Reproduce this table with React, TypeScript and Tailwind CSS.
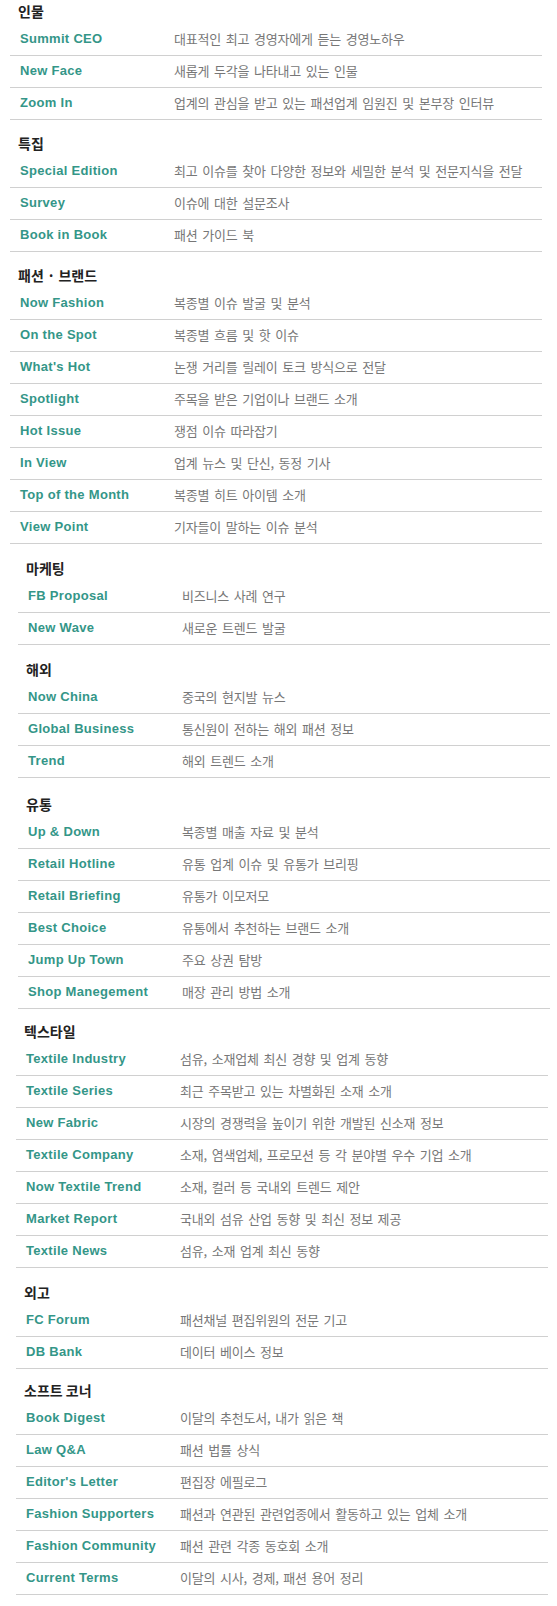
import React from 'react';

type Item = { title: string; desc: string };
type Section = { name: string; box: string; items: Item[] };

const sections: Section[] = [
  {
    name: '인물',
    box: 'ml-[10px]',
    items: [
      { title: 'Summit CEO', desc: '대표적인 최고 경영자에게 듣는 경영노하우' },
      { title: 'New Face', desc: '새롭게 두각을 나타내고 있는 인물' },
      { title: 'Zoom In', desc: '업계의 관심을 받고 있는 패션업계 임원진 및 본부장 인터뷰' },
    ],
  },
  {
    name: '특집',
    box: 'ml-[10px] mt-[12px]',
    items: [
      { title: 'Special Edition', desc: '최고 이슈를 찾아 다양한 정보와 세밀한 분석 및 전문지식을 전달' },
      { title: 'Survey', desc: '이슈에 대한 설문조사' },
      { title: 'Book in Book', desc: '패션 가이드 북' },
    ],
  },
  {
    name: '패션 · 브랜드',
    box: 'ml-[10px] mt-[12px]',
    items: [
      { title: 'Now Fashion', desc: '복종별 이슈 발굴 및 분석' },
      { title: 'On the Spot', desc: '복종별 흐름 및 핫 이슈' },
      { title: "What's Hot", desc: '논쟁 거리를 릴레이 토크 방식으로 전달' },
      { title: 'Spotlight', desc: '주목을 받은 기업이나 브랜드 소개' },
      { title: 'Hot Issue', desc: '쟁점 이슈 따라잡기' },
      { title: 'In View', desc: '업계 뉴스 및 단신, 동정 기사' },
      { title: 'Top of the Month', desc: '복종별 히트 아이템 소개' },
      { title: 'View Point', desc: '기자들이 말하는 이슈 분석' },
    ],
  },
  {
    name: '마케팅',
    box: 'ml-[18px] mt-[13px]',
    items: [
      { title: 'FB Proposal', desc: '비즈니스 사례 연구' },
      { title: 'New Wave', desc: '새로운 트렌드 발굴' },
    ],
  },
  {
    name: '해외',
    box: 'ml-[18px] mt-[13px]',
    items: [
      { title: 'Now China', desc: '중국의 현지발 뉴스' },
      { title: 'Global Business', desc: '통신원이 전하는 해외 패션 정보' },
      { title: 'Trend', desc: '해외 트렌드 소개' },
    ],
  },
  {
    name: '유통',
    box: 'ml-[18px] mt-[15px]',
    items: [
      { title: 'Up & Down', desc: '복종별 매출 자료 및 분석' },
      { title: 'Retail Hotline', desc: '유통 업계 이슈 및 유통가 브리핑' },
      { title: 'Retail Briefing', desc: '유통가 이모저모' },
      { title: 'Best Choice', desc: '유통에서 추천하는 브랜드 소개' },
      { title: 'Jump Up Town', desc: '주요 상권 탐방' },
      { title: 'Shop Manegement', desc: '매장 관리 방법 소개' },
    ],
  },
  {
    name: '텍스타일',
    box: 'ml-[16px] mt-[11px]',
    items: [
      { title: 'Textile Industry', desc: '섬유, 소재업체 최신 경향 및 업계 동향' },
      { title: 'Textile Series', desc: '최근 주목받고 있는 차별화된 소재 소개' },
      { title: 'New Fabric', desc: '시장의 경쟁력을 높이기 위한 개발된 신소재 정보' },
      { title: 'Textile Company', desc: '소재, 염색업체, 프로모션 등 각 분야별 우수 기업 소개' },
      { title: 'Now Textile Trend', desc: '소재, 컬러 등 국내외 트렌드 제안' },
      { title: 'Market Report', desc: '국내외 섬유 산업 동향 및 최신 정보 제공' },
      { title: 'Textile News', desc: '섬유, 소재 업계 최신 동향' },
    ],
  },
  {
    name: '외고',
    box: 'ml-[16px] mt-[13px]',
    items: [
      { title: 'FC Forum', desc: '패션채널 편집위원의 전문 기고' },
      { title: 'DB Bank', desc: '데이터 베이스 정보' },
    ],
  },
  {
    name: '소프트 코너',
    box: 'ml-[16px] mt-[10px]',
    items: [
      { title: 'Book Digest', desc: '이달의 추천도서, 내가 읽은 책' },
      { title: 'Law Q&A', desc: '패션 법률 상식' },
      { title: "Editor's Letter", desc: '편집장 에필로그' },
      { title: 'Fashion Supporters', desc: '패션과 연관된 관련업종에서 활동하고 있는 업체 소개' },
      { title: 'Fashion Community', desc: '패션 관련 각종 동호회 소개' },
      { title: 'Current Terms', desc: '이달의 시사, 경제, 패션 용어 정리' },
    ],
  },
];

const SectionBlock: React.FC<{ section: Section }> = ({ section }) => (
  <div className={`w-[532px] ${section.box}`}>
    <h3 className="h-[24px] pl-[8px] font-['Noto_Sans_CJK_KR',sans-serif] text-[14px] font-bold leading-[22px] text-[#222]">
      {section.name}
    </h3>
    <ul>
      {section.items.map((item) => (
        <li
          key={item.title}
          className="flex h-[32px] items-center border-b border-[#d0d0d0] pb-[2px]"
        >
          <span className="w-[164px] shrink-0 pl-[10px] font-['Liberation_Sans',Arial,sans-serif] text-[13px] font-bold tracking-[0.3px] text-[#349688]">
            {item.title}
          </span>
          <span className="whitespace-nowrap font-['Noto_Sans_CJK_KR',sans-serif] text-[13px] tracking-[-0.2px] text-[#777] [word-spacing:2px]">
            {item.desc}
          </span>
        </li>
      ))}
    </ul>
  </div>
);

export default function App() {
  return (
    <div className="min-h-[1606px] w-[557px] bg-white pb-[11px]">
      {sections.map((s) => (
        <SectionBlock key={s.name} section={s} />
      ))}
    </div>
  );
}
